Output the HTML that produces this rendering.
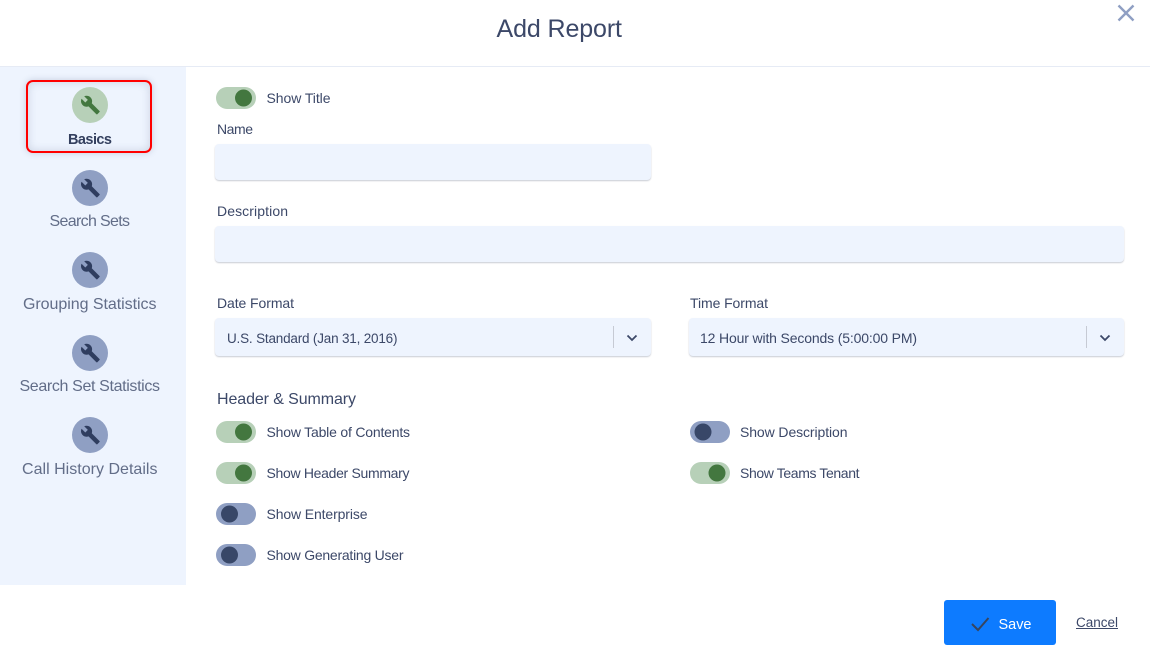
<!DOCTYPE html>
<html lang="en">
<head>
<meta charset="utf-8">
<title>Add Report</title>
<style>
html,body{margin:0;padding:0;background:#fff;width:1150px;height:655px;overflow:hidden}
.b{position:absolute}
.hd{left:0;top:66px;width:1150px;height:1px;background:#e6ebf5}
.side{left:0;top:67px;width:186px;height:518px;background:#eef4fe}
.sel{left:26px;top:80px;width:122px;height:69px;border:2px solid #f00;border-radius:7px;box-shadow:0 0 7px rgba(60,75,110,.22),inset 0 0 9px rgba(60,75,110,.2)}
.in{background:#eef4fe;border-radius:4px;box-shadow:0 1px 1.5px rgba(58,71,102,.28)}
.save{left:944px;top:600px;width:112px;height:45px;background:#0d7bff;border-radius:3px}
svg{position:absolute;left:0;top:0}
text{font-family:"Liberation Sans",sans-serif;font-size:14px;fill:#3c4868}
.sl{font-size:16px;fill:#626d88}
</style>
</head>
<body>
<div class="b hd"></div>
<div class="b side"></div>
<div class="b sel"></div>
<div class="b in" style="left:215px;top:144px;width:436px;height:36px"></div>
<div class="b in" style="left:215px;top:226px;width:909px;height:36px"></div>
<div class="b in" style="left:215px;top:318px;width:436px;height:38px"></div>
<div class="b in" style="left:689px;top:318px;width:435px;height:38px"></div>
<div class="b save"></div>
<svg width="1150" height="655" viewBox="0 0 1150 655" xmlns="http://www.w3.org/2000/svg">
<defs>
<path id="w" d="M22.7 19l-9.1-9.1c.9-2.3.4-5-1.5-6.9-2-2-5-2.4-7.4-1.3L9 6 6 9 1.6 4.7C.4 7.1.9 10.1 2.9 12.1c1.9 1.9 4.6 2.4 6.9 1.5l9.1 9.1c.4.4 1 .4 1.4 0l2.3-2.3c.5-.4.5-1.1.1-1.4z"/>
</defs>

<text x="496.5" y="37" textLength="125.5" lengthAdjust="spacing" style="font-size:25px">Add Report</text>
<path d="M1118.5 5.5l15 15M1133.5 5.5l-15 15" stroke="#8f9fc3" stroke-width="2.4" fill="none"/>

<!-- sidebar -->
<circle cx="90" cy="105" r="18" fill="#b7d0b8"/>
<use href="#w" transform="translate(80.2 94.8) scale(.85)" fill="#43773f"/>
<text x="68" y="144" textLength="44" lengthAdjust="spacing" style="font-size:14.5px;font-weight:700;fill:#333f5e">Basics</text>

<circle cx="90" cy="188" r="18" fill="#8f9fc3"/>
<use href="#w" transform="translate(80.2 177.8) scale(.85)" fill="#2f3d5f"/>
<text class="sl" x="49.5" y="226" textLength="80.5" lengthAdjust="spacing">Search Sets</text>

<circle cx="90" cy="270" r="18" fill="#8f9fc3"/>
<use href="#w" transform="translate(80.2 259.8) scale(.85)" fill="#2f3d5f"/>
<text class="sl" x="23" y="309" textLength="133.5" lengthAdjust="spacing">Grouping Statistics</text>

<circle cx="90" cy="353" r="18" fill="#8f9fc3"/>
<use href="#w" transform="translate(80.2 342.8) scale(.85)" fill="#2f3d5f"/>
<text class="sl" x="19.5" y="391" textLength="140.5" lengthAdjust="spacing">Search Set Statistics</text>

<circle cx="90" cy="435" r="18" fill="#8f9fc3"/>
<use href="#w" transform="translate(80.2 424.8) scale(.85)" fill="#2f3d5f"/>
<text class="sl" x="22" y="474" textLength="135.5" lengthAdjust="spacing">Call History Details</text>

<!-- toggles -->
<rect x="216" y="87" width="40" height="22" rx="11" fill="#b7d0b8"/><circle cx="243.5" cy="98" r="8.5" fill="#43773f"/>
<text x="266.5" y="103" textLength="64" lengthAdjust="spacing">Show Title</text>

<text x="217" y="134" textLength="36" lengthAdjust="spacing">Name</text>
<text x="217" y="216" textLength="71" lengthAdjust="spacing">Description</text>
<text x="217" y="308" textLength="77" lengthAdjust="spacing">Date Format</text>
<text x="690" y="308" textLength="78" lengthAdjust="spacing">Time Format</text>

<text x="227" y="343" textLength="170.5" lengthAdjust="spacing" style="font-size:13.5px">U.S. Standard (Jan 31, 2016)</text>
<rect x="613" y="326" width="1" height="22" fill="#c6cad4"/>
<path d="M627.5 335.5l4.5 4.5 4.5-4.5" fill="none" stroke="#3c4868" stroke-width="1.8"/>

<text x="700" y="343" textLength="217" lengthAdjust="spacing">12 Hour with Seconds (5:00:00 PM)</text>
<rect x="1086" y="326" width="1" height="22" fill="#c6cad4"/>
<path d="M1100.5 335.5l4.5 4.5 4.5-4.5" fill="none" stroke="#3c4868" stroke-width="1.8"/>

<text x="217" y="404" textLength="139" lengthAdjust="spacing" style="font-size:16px">Header &amp; Summary</text>

<rect x="216" y="421" width="40" height="22" rx="11" fill="#b7d0b8"/><circle cx="243.5" cy="432" r="8.5" fill="#43773f"/>
<text x="266.5" y="437" textLength="143.5" lengthAdjust="spacing">Show Table of Contents</text>

<rect x="216" y="462" width="40" height="22" rx="11" fill="#b7d0b8"/><circle cx="243.5" cy="473" r="8.5" fill="#43773f"/>
<text x="266.5" y="478" textLength="143" lengthAdjust="spacing">Show Header Summary</text>

<rect x="216" y="503" width="40" height="22" rx="11" fill="#8f9fc3"/><circle cx="229.5" cy="514" r="8.5" fill="#384768"/>
<text x="266.5" y="519" textLength="101" lengthAdjust="spacing">Show Enterprise</text>

<rect x="216" y="544" width="40" height="22" rx="11" fill="#8f9fc3"/><circle cx="229.5" cy="555" r="8.5" fill="#384768"/>
<text x="266.5" y="560" textLength="137" lengthAdjust="spacing">Show Generating User</text>

<rect x="690" y="421" width="40" height="22" rx="11" fill="#8f9fc3"/><circle cx="703" cy="432" r="8.5" fill="#384768"/>
<text x="740" y="437" textLength="107.5" lengthAdjust="spacing">Show Description</text>

<rect x="690" y="462" width="40" height="22" rx="11" fill="#b7d0b8"/><circle cx="717" cy="473" r="8.5" fill="#43773f"/>
<text x="740" y="478" textLength="119.5" lengthAdjust="spacing">Show Teams Tenant</text>

<!-- footer -->
<path d="M972 624l6 6 10.5-12" fill="none" stroke="#37455f" stroke-width="2"/>
<text x="998.5" y="629" textLength="33" lengthAdjust="spacing" style="font-size:14.5px;fill:#fff">Save</text>
<text x="1076" y="627" textLength="42" lengthAdjust="spacing" style="font-size:13.5px">Cancel</text>
<rect x="1076" y="628" width="42" height="1" fill="#3c4868"/>
</svg>
</body>
</html>
